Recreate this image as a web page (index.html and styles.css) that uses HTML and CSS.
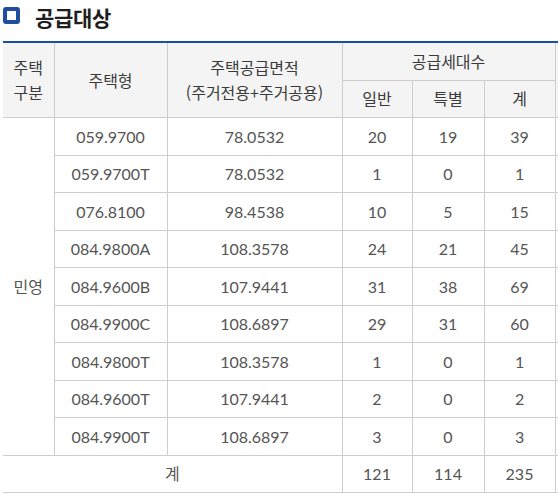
FILE: index.html
```html
<!DOCTYPE html>
<html lang="ko">
<head>
<meta charset="utf-8">
<link rel="stylesheet" href="styles.css">
</head>
<body>
<div class="page">
  <h2 class="title"><span class="title-icon"></span>공급대상</h2>
  <table class="supply">
    <colgroup>
      <col class="c1"><col class="c2"><col class="c3"><col class="c4"><col class="c5"><col class="c6"><col class="c7">
    </colgroup>
    <thead>
      <tr>
        <th rowspan="2" class="first">주택<br>구분</th>
        <th rowspan="2">주택형</th>
        <th rowspan="2">주택공급면적<br>(주거전용+주거공용)</th>
        <th colspan="3">공급세대수</th>
        <th rowspan="2" class="edge"></th>
      </tr>
      <tr>
        <th>일반</th>
        <th>특별</th>
        <th>계</th>
      </tr>
    </thead>
    <tbody>
      <tr><td rowspan="9" class="first">민영</td><td>059.9700</td><td>78.0532</td><td>20</td><td>19</td><td>39</td><td class="edge"></td></tr>
      <tr><td>059.9700T</td><td>78.0532</td><td>1</td><td>0</td><td>1</td><td class="edge"></td></tr>
      <tr><td>076.8100</td><td>98.4538</td><td>10</td><td>5</td><td>15</td><td class="edge"></td></tr>
      <tr><td>084.9800A</td><td>108.3578</td><td>24</td><td>21</td><td>45</td><td class="edge"></td></tr>
      <tr><td>084.9600B</td><td>107.9441</td><td>31</td><td>38</td><td>69</td><td class="edge"></td></tr>
      <tr><td>084.9900C</td><td>108.6897</td><td>29</td><td>31</td><td>60</td><td class="edge"></td></tr>
      <tr><td>084.9800T</td><td>108.3578</td><td>1</td><td>0</td><td>1</td><td class="edge"></td></tr>
      <tr><td>084.9600T</td><td>107.9441</td><td>2</td><td>0</td><td>2</td><td class="edge"></td></tr>
      <tr><td>084.9900T</td><td>108.6897</td><td>3</td><td>0</td><td>3</td><td class="edge"></td></tr>
      <tr class="total"><td colspan="3" class="first">계</td><td>121</td><td>114</td><td>235</td><td class="edge"></td></tr>
    </tbody>
  </table>
</div>
</body>
</html>
```

FILE: styles.css
```css
html, body {
  margin: 0;
  padding: 0;
  background: #fff;
  overflow: hidden;
}

.page {
  padding: 0 0 0 3px;
  width: 620px;
  font-family: Lato, "Noto Sans CJK KR", sans-serif;
}

.title {
  display: flex;
  align-items: center;
  margin: 0;
  height: 33px;
  font-family: "Noto Sans CJK KR", sans-serif;
  font-size: 21px;
  font-weight: 700;
  color: #1e1e1e;
  letter-spacing: -0.3px;
}

.title-icon {
  width: 9px;
  height: 9px;
  border: 4px solid #1f4ea1;
  border-radius: 3px;
  margin: -2px 15px 0 0;
  flex: none;
}

.supply {
  margin-top: 8px;
  border-collapse: collapse;
  table-layout: fixed;
  width: 600px;
  border-top: 2px solid #1c4ca3;
  font-size: 16px;
}

.c1 { width: 51px; }
.c2 { width: 113px; }
.c3 { width: 175px; }
.c4 { width: 70px; }
.c5 { width: 72px; }
.c6 { width: 71px; }
.c7 { width: 48px; }

.supply th,
.supply td {
  border: 1px solid #cdcdcd;
  text-align: center;
  vertical-align: middle;
  padding: 0;
  height: 36.5px;
  line-height: 25px;
}

.supply th {
  background: #f4f4f4;
  font-family: "Noto Sans CJK KR", sans-serif;
  font-weight: 400;
  color: #3a3a3a;
  font-size: 16px;
}

.supply td {
  color: #555;
}

.supply td.first {
  font-family: "Noto Sans CJK KR", sans-serif;
  font-size: 16px;
}

.supply .first {
  border-left: none;
}

.supply .edge {
  border-right: none;
}

.supply th.edge {
  background: #f4f4f4;
}
```
